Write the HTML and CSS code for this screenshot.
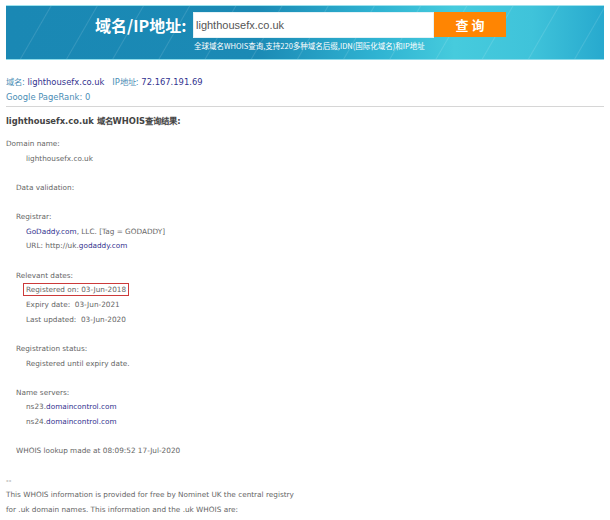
FILE: index.html
```html
<!DOCTYPE html>
<html lang="zh-CN">
<head>
<meta charset="utf-8">
<title>lighthousefx.co.uk WHOIS</title>
<link rel="stylesheet" href="styles.css">
</head>
<body>
<div class="banner">
  <div class="banner-label">域名/IP地址:</div>
  <div class="banner-form">
    <div class="search-row">
      <div class="search-input">lighthousefx.co.uk</div>
      <div class="search-btn">查 询</div>
    </div>
    <div class="search-hint">全球域名WHOIS查询,支持220多种域名后缀,IDN(国际化域名)和IP地址</div>
  </div>
</div>

<div class="info">
  <div class="info-line"><span class="muted">域名:</span> <span class="link">lighthousefx.co.uk</span>&nbsp;&nbsp;&nbsp;<span class="muted">IP地址:</span> <span class="link">72.167.191.69</span></div>
  <div class="info-line muted">Google PageRank: 0</div>
</div>
<div class="rule"></div>

<div class="result-title">lighthousefx.co.uk 域名WHOIS查询结果:</div>

<div class="whois">
  <div class="l0">Domain name:</div>
  <div class="l2">lighthousefx.co.uk</div>
  <div class="blank"></div>
  <div class="l1">Data validation:</div>
  <div class="blank"></div>
  <div class="l1">Registrar:</div>
  <div class="l2"><span class="link">GoDaddy.com</span>, LLC. [Tag = GODADDY]</div>
  <div class="l2">URL: http://uk.<span class="link">godaddy.com</span></div>
  <div class="blank"></div>
  <div class="l1">Relevant dates:</div>
  <div class="l2"><span class="highlight">Registered on: 03-Jun-2018</span></div>
  <div class="l2">Expiry date:&nbsp; 03-Jun-2021</div>
  <div class="l2">Last updated:&nbsp; 03-Jun-2020</div>
  <div class="blank"></div>
  <div class="l1">Registration status:</div>
  <div class="l2">Registered until expiry date.</div>
  <div class="blank"></div>
  <div class="l1">Name servers:</div>
  <div class="l2">ns23.<span class="link">domaincontrol.com</span></div>
  <div class="l2">ns24.<span class="link">domaincontrol.com</span></div>
  <div class="blank"></div>
  <div class="l1">WHOIS lookup made at 08:09:52 17-Jul-2020</div>
  <div class="blank"></div>
  <div class="l0">--</div>
  <div class="l0">This WHOIS information is provided for free by Nominet UK the central registry</div>
  <div class="l0">for .uk domain names. This information and the .uk WHOIS are:</div>
</div>
</body>
</html>
```
FILE: styles.css
```css
html, body {
  margin: 0;
  padding: 0;
  background: #ffffff;
}
body {
  font-family: "DejaVu Sans", Verdana, sans-serif;
  color: #666666;
}
.banner {
  margin: 5px 6px 0;
  height: 55px;
  box-sizing: border-box;
  border-top: 1px solid #9ee3ee;
  border-bottom: 1px solid #8fdcea;
  padding: 6px 0 0 89px;
  display: flex;
  background:
    repeating-linear-gradient(120deg, rgba(255,255,255,0) 0px, rgba(255,255,255,0) 38px, rgba(255,255,255,0.12) 39px, rgba(255,255,255,0) 40px),
    linear-gradient(90deg, #1a88b4 0%, #1b8ab5 42%, #2fb3d2 62%, #46cbdd 75%, #3fc3da 88%, #27a9ce 100%);
}
.banner-label {
  width: 92px;
  margin-right: 6px;
  line-height: 26px;
  font-family: "Noto Sans CJK SC", "DejaVu Sans", sans-serif;
  font-weight: 700;
  font-size: 16px;
  color: #ffffff;
  white-space: nowrap;
}
.banner-form {
  display: flex;
  flex-direction: column;
}
.search-row {
  display: flex;
}
.search-input {
  width: 241px;
  height: 26px;
  box-sizing: border-box;
  padding-left: 2px;
  background: #ffffff;
  border: 1px solid #e4f2f6;
  font-family: "Liberation Sans", Arial, sans-serif;
  font-size: 11px;
  line-height: 24px;
  color: #555555;
}
.search-btn {
  width: 72px;
  height: 25px;
  background: #ff8502;
  color: #ffffff;
  font-family: "Noto Sans CJK SC", sans-serif;
  font-weight: 700;
  font-size: 13px;
  line-height: 25px;
  text-align: center;
}
.search-hint {
  margin-top: 2px;
  padding-left: 1px;
  font-family: "Noto Sans CJK SC", "DejaVu Sans", sans-serif;
  font-size: 7.5px;
  line-height: 11px;
  color: #ffffff;
  white-space: nowrap;
}
.info {
  padding: 15px 6px 0;
  font-size: 8.4px;
}
.info-line {
  line-height: 15px;
  white-space: nowrap;
}
.muted {
  color: #4a8db5;
}
.link {
  color: #33338f;
}
.rule {
  margin: 1px 6px 0;
  height: 1px;
  background: #d6d6d6;
}
.result-title {
  padding: 7px 6px 0;
  font-size: 8.4px;
  font-weight: 700;
  color: #444444;
  line-height: 14px;
  white-space: nowrap;
}
.whois {
  padding: 9px 0 0 6px;
  font-size: 7.3px;
  line-height: 14.64px;
  color: #666666;
}
.whois > div {
  white-space: nowrap;
}
.blank {
  height: 14.64px;
}
.l1 {
  padding-left: 10px;
}
.l2 {
  padding-left: 20px;
}
.highlight {
  border: 1px solid #cc3a3a;
  padding: 1px 2px;
  margin-left: -3px;
}
```
